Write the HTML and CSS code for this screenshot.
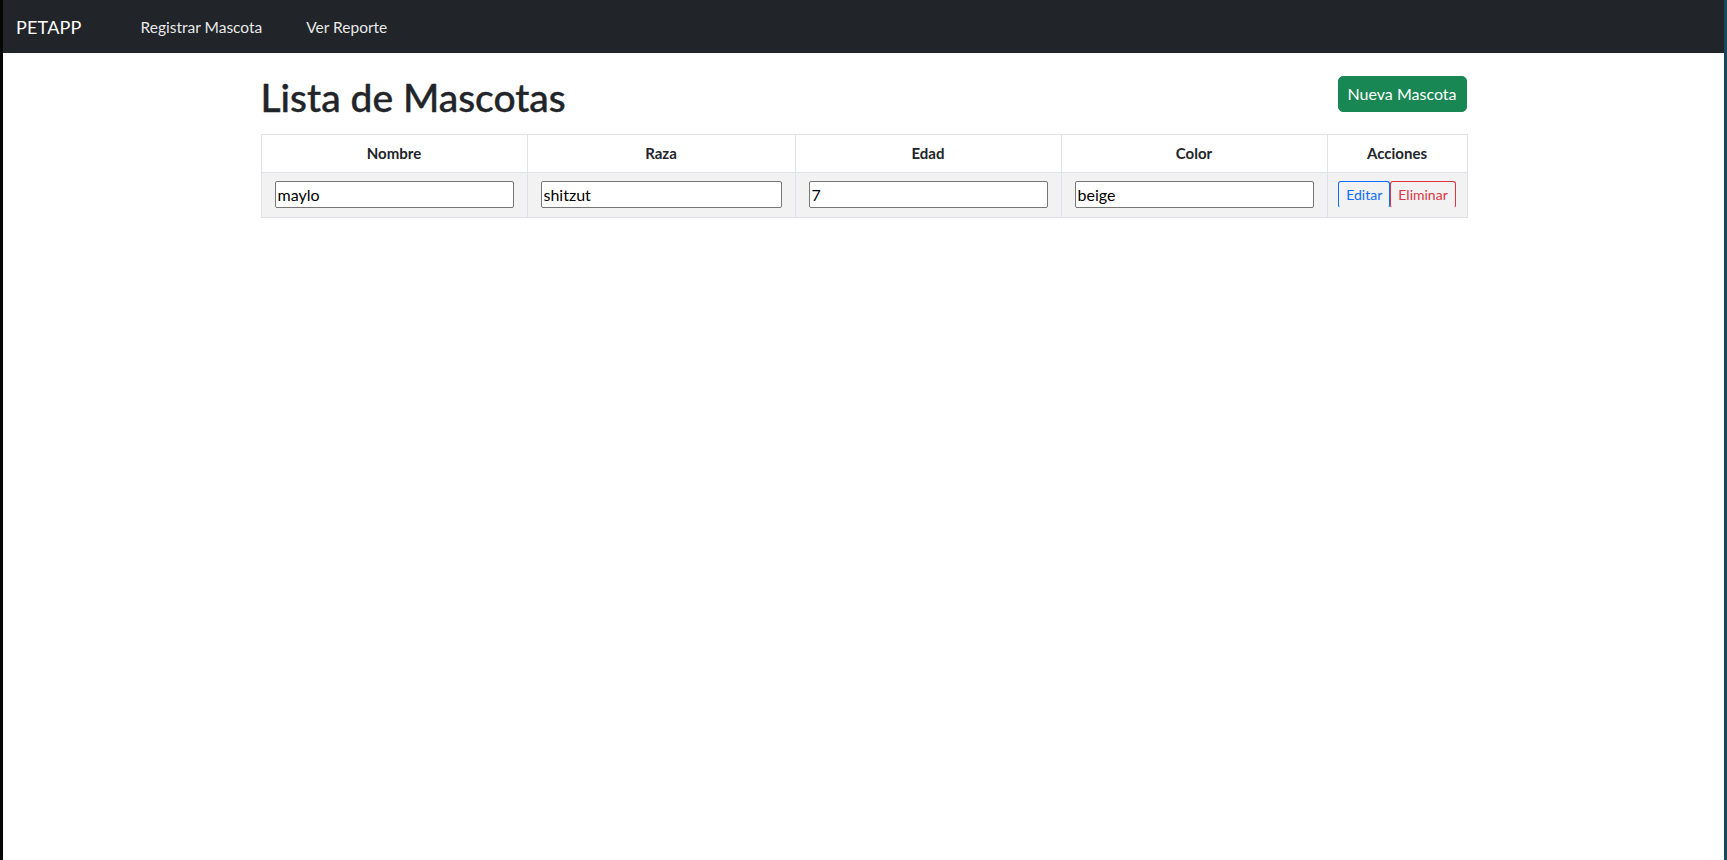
FILE: index.html
```html
<!DOCTYPE html>
<html lang="es">
<head>
<meta charset="utf-8">
<title>PETAPP</title>
<link rel="stylesheet" href="styles.css">
</head>
<body>
<nav class="navbar">
  <a class="brand" href="#">PETAPP</a>
  <div class="nav-links">
    <a class="nav-link" href="#">Registrar Mascota</a>
    <a class="nav-link" href="#">Ver Reporte</a>
  </div>
</nav>
<main class="container">
  <div class="page-header">
    <h1 class="title">Lista de Mascotas</h1>
    <button class="btn btn-success">Nueva Mascota</button>
  </div>
  <table class="pets">
    <thead>
      <tr>
        <th class="col-std">Nombre</th>
        <th class="col-wide">Raza</th>
        <th class="col-std">Edad</th>
        <th class="col-std">Color</th>
        <th class="col-actions">Acciones</th>
      </tr>
    </thead>
    <tbody>
      <tr class="striped">
        <td><input class="field" type="text" value="maylo"></td>
        <td><input class="field" type="text" value="shitzut"></td>
        <td><input class="field" type="text" value="7"></td>
        <td><input class="field" type="text" value="beige"></td>
        <td class="actions">
          <div class="btn-pair">
            <button class="btn-sm btn-outline-primary">Editar</button>
            <button class="btn-sm btn-outline-danger">Eliminar</button>
          </div>
        </td>
      </tr>
    </tbody>
  </table>
</main>
</body>
</html>
```
FILE: styles.css
```css
* { box-sizing: border-box; }

html, body { margin: 0; padding: 0; }

body {
  min-height: 100vh;
  background: #fff;
  border-left: 3px solid #050505;
  border-right: 3px solid #18485a;
  font-family: Lato, "Liberation Sans", sans-serif;
  color: #212529;
}

.navbar {
  display: flex;
  align-items: center;
  height: 53px;
  background: #212529;
  padding-left: 13px;
}

.brand {
  color: #fff;
  font-size: 18px;
  text-decoration: none;
  margin-right: 59px;
  letter-spacing: 0.2px;
}

.nav-links {
  display: flex;
  gap: 44px;
}

.nav-link {
  color: rgba(255, 255, 255, 0.92);
  font-size: 15.5px;
  text-decoration: none;
}

.container {
  width: 1206px;
  margin: 0 auto;
  padding-top: 20px;
}

.page-header {
  display: flex;
  justify-content: space-between;
  align-items: flex-start;
  margin-bottom: 13px;
}

.title {
  margin: 0;
  font-size: 39px;
  font-weight: 500;
  line-height: 48px;
  color: #212529;
  -webkit-text-stroke: 0.4px #212529;
}

.btn {
  font-family: inherit;
  font-size: 16px;
  line-height: 24px;
  padding: 5px 9px;
  border-radius: 5px;
  border: 1px solid transparent;
  cursor: pointer;
  margin-top: 3px;
}

.btn-success {
  background: #198754;
  border-color: #198754;
  color: #fff;
}

.pets {
  width: 100%;
  border-collapse: collapse;
  table-layout: fixed;
  border: 1px solid #dee2e6;
}

.pets th, .pets td {
  border: 1px solid #dee2e6;
}

.pets th {
  font-size: 15px;
  font-weight: 700;
  line-height: 21px;
  padding: 8px;
  text-align: center;
  background: #fff;
}

.col-std { width: 266px; }
.col-wide { width: 268px; }
.col-actions { width: 140px; }

.pets td {
  padding: 8px 13px 9px;
  vertical-align: middle;
}

.striped td { background: #f2f2f2; }

.field {
  display: block;
  width: 100%;
  height: 27px;
  padding: 1px 2px;
  border: 1px solid #767676;
  border-radius: 2px;
  background: #fff;
  font-family: inherit;
  font-size: 16px;
  color: #000;
}

.pets td.actions {
  padding: 8px 10px 9px;
}

.btn-pair {
  display: flex;
  justify-content: center;
}

.btn-sm {
  font-family: inherit;
  font-size: 14px;
  line-height: 21px;
  height: 27px;
  padding: 2px 7px;
  background: transparent;
  border: 1px solid;
  border-bottom-color: transparent;
  border-radius: 3px;
  cursor: pointer;
}

.btn-outline-primary {
  color: #0d6efd;
  border-color: #0d6efd;
  border-bottom-color: transparent;
}

.btn-outline-danger {
  color: #dc3545;
  border-color: #dc3545;
  border-bottom-color: transparent;
}
```
